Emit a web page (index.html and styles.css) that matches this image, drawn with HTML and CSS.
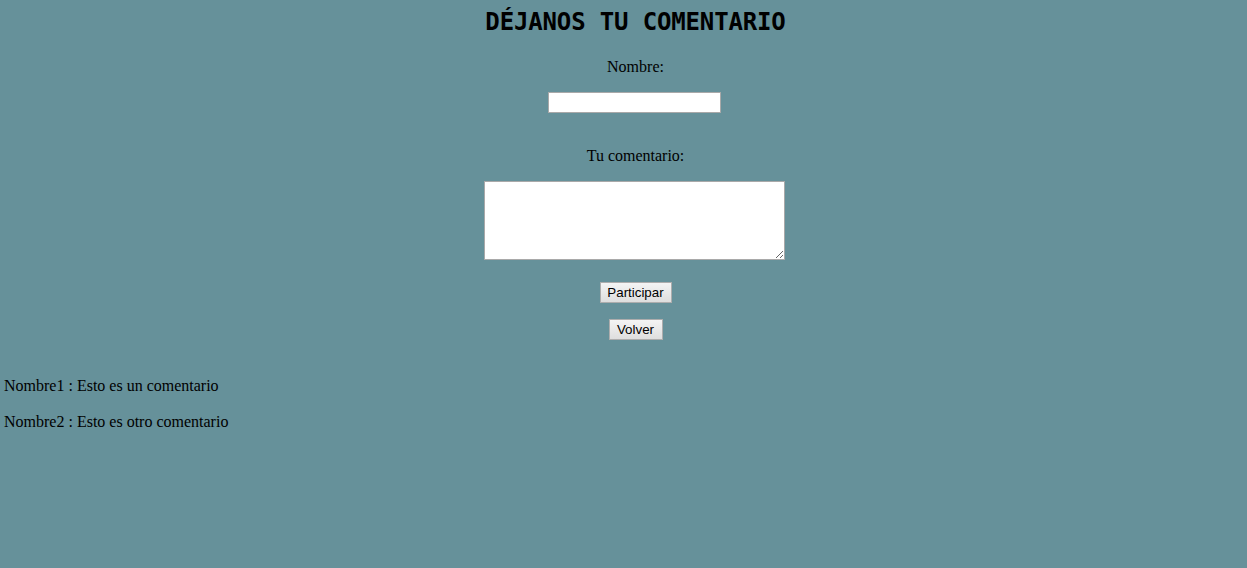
FILE: index.html
```html
<!DOCTYPE html>
<html lang="es">
<head>
<meta charset="utf-8">
<title>Déjanos tu comentario</title>
<link rel="stylesheet" href="styles.css">
</head>
<body>
<main class="page">
  <div class="center">
    <h1 class="title">DÉJANOS TU COMENTARIO</h1>
    <form class="form">
      <label class="label label-name" for="nombre">Nombre:</label>
      <input class="field-name" id="nombre" type="text">
      <label class="label label-comment" for="comentario">Tu comentario:</label>
      <textarea class="field-comment" id="comentario"></textarea>
      <button class="btn btn-send" type="button">Participar</button>
      <button class="btn btn-back" type="button">Volver</button>
    </form>
  </div>
  <section class="comments">
    <p class="comment">Nombre1 : Esto es un comentario</p>
    <p class="comment">Nombre2 : Esto es otro comentario</p>
  </section>
</main>
</body>
</html>
```
FILE: styles.css
```css
html, body {
  margin: 0;
  padding: 0;
}
body {
  background: #66919a;
  color: #000;
  font-family: "Liberation Serif", "Times New Roman", serif;
  font-size: 16px;
  width: 1247px;
  height: 568px;
  overflow: hidden;
}
.page {
  padding: 0 4px;
}
.center {
  padding-left: 22px;
}
.title {
  margin: 8px 0 0;
  padding-left: 2px;
  font-family: "DejaVu Sans Mono", "Liberation Mono", monospace;
  font-size: 24px;
  font-weight: bold;
  line-height: 28px;
  text-align: center;
  letter-spacing: -0.15px;
}
.form {
  display: flex;
  flex-direction: column;
  align-items: center;
}
.label {
  display: block;
  line-height: 18px;
  margin-left: 2px;
}
.label-name {
  margin-top: 22px;
}
.field-name {
  box-sizing: border-box;
  margin: 16px 0 0;
  width: 173px;
  height: 21px;
  border: 1px solid #a9a9a9;
  background: #fff;
  padding: 1px 2px;
}
.label-comment {
  margin-top: 34px;
}
.field-comment {
  box-sizing: border-box;
  margin: 16px 0 0;
  width: 301px;
  height: 79px;
  border: 1px solid #a9a9a9;
  background: #fff;
  padding: 2px;
  resize: both;
}
.btn {
  box-sizing: border-box;
  height: 21px;
  margin-left: 2px;
  padding: 0 4px;
  border: 1px solid #adadad;
  border-radius: 0;
  background: linear-gradient(#f4f4f4, #dedede);
  font-family: "Liberation Sans", Arial, sans-serif;
  font-size: 13.33px;
  color: #000;
  line-height: 19px;
}
.btn-send {
  margin-top: 22px;
  width: 72px;
}
.btn-back {
  margin-top: 16px;
  width: 54px;
}
.comments {
  margin-top: 37px;
}
.comment {
  margin: 0 0 18px;
  line-height: 18px;
}
```
